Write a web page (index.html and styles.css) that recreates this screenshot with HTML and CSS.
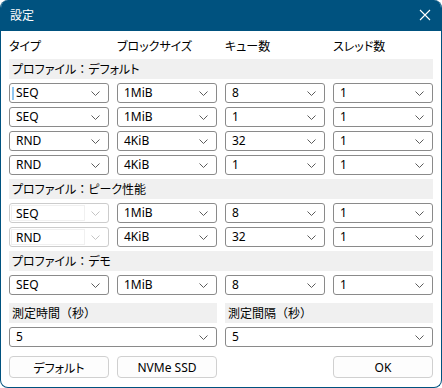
FILE: index.html
```html
<!DOCTYPE html>
<html lang="ja">
<head>
    <meta charset="UTF-8">
    <meta name="viewport" content="width=device-width, initial-scale=1.0">
    <title>設定</title>
    <link rel="stylesheet" href="styles.css">
</head>
<body>
    <div class="window">
        <div class="titlebar">
            <span class="title">設定</span>
            <svg class="close" width="12" height="12" viewBox="0 0 12 12">
                <path d="M1 1 L11 11 M11 1 L1 11" stroke="#ffffff" stroke-width="1.1" fill="none"/>
            </svg>
        </div>

        <div class="content">
            <div class="grid header">
                <span class="kana">タイプ</span>
                <span class="kana">ブロックサイズ</span>
                <span class="kana">キュー数</span>
                <span class="kana">スレッド数</span>
            </div>

            <div class="band kana">プロファイル<span class="colon">：</span>デフォルト</div>
            <div class="grid">
                <div class="select first"><span class="caret"></span><span class="value">SEQ</span><svg class="chev" width="9" height="5" viewBox="0 0 9 5"><path d="M0.5 0.5 L4.5 4.5 L8.5 0.5" stroke="#5c5c5c" fill="none"/></svg></div>
                <div class="select"><span class="value">1MiB</span><svg class="chev" width="9" height="5" viewBox="0 0 9 5"><path d="M0.5 0.5 L4.5 4.5 L8.5 0.5" stroke="#5c5c5c" fill="none"/></svg></div>
                <div class="select"><span class="value">8</span><svg class="chev" width="9" height="5" viewBox="0 0 9 5"><path d="M0.5 0.5 L4.5 4.5 L8.5 0.5" stroke="#5c5c5c" fill="none"/></svg></div>
                <div class="select"><span class="value">1</span><svg class="chev" width="9" height="5" viewBox="0 0 9 5"><path d="M0.5 0.5 L4.5 4.5 L8.5 0.5" stroke="#5c5c5c" fill="none"/></svg></div>
            </div>
            <div class="grid">
                <div class="select"><span class="value">SEQ</span><svg class="chev" width="9" height="5" viewBox="0 0 9 5"><path d="M0.5 0.5 L4.5 4.5 L8.5 0.5" stroke="#5c5c5c" fill="none"/></svg></div>
                <div class="select"><span class="value">1MiB</span><svg class="chev" width="9" height="5" viewBox="0 0 9 5"><path d="M0.5 0.5 L4.5 4.5 L8.5 0.5" stroke="#5c5c5c" fill="none"/></svg></div>
                <div class="select"><span class="value">1</span><svg class="chev" width="9" height="5" viewBox="0 0 9 5"><path d="M0.5 0.5 L4.5 4.5 L8.5 0.5" stroke="#5c5c5c" fill="none"/></svg></div>
                <div class="select"><span class="value">1</span><svg class="chev" width="9" height="5" viewBox="0 0 9 5"><path d="M0.5 0.5 L4.5 4.5 L8.5 0.5" stroke="#5c5c5c" fill="none"/></svg></div>
            </div>
            <div class="grid">
                <div class="select"><span class="value">RND</span><svg class="chev" width="9" height="5" viewBox="0 0 9 5"><path d="M0.5 0.5 L4.5 4.5 L8.5 0.5" stroke="#5c5c5c" fill="none"/></svg></div>
                <div class="select"><span class="value">4KiB</span><svg class="chev" width="9" height="5" viewBox="0 0 9 5"><path d="M0.5 0.5 L4.5 4.5 L8.5 0.5" stroke="#5c5c5c" fill="none"/></svg></div>
                <div class="select"><span class="value">32</span><svg class="chev" width="9" height="5" viewBox="0 0 9 5"><path d="M0.5 0.5 L4.5 4.5 L8.5 0.5" stroke="#5c5c5c" fill="none"/></svg></div>
                <div class="select"><span class="value">1</span><svg class="chev" width="9" height="5" viewBox="0 0 9 5"><path d="M0.5 0.5 L4.5 4.5 L8.5 0.5" stroke="#5c5c5c" fill="none"/></svg></div>
            </div>
            <div class="grid">
                <div class="select"><span class="value">RND</span><svg class="chev" width="9" height="5" viewBox="0 0 9 5"><path d="M0.5 0.5 L4.5 4.5 L8.5 0.5" stroke="#5c5c5c" fill="none"/></svg></div>
                <div class="select"><span class="value">4KiB</span><svg class="chev" width="9" height="5" viewBox="0 0 9 5"><path d="M0.5 0.5 L4.5 4.5 L8.5 0.5" stroke="#5c5c5c" fill="none"/></svg></div>
                <div class="select"><span class="value">1</span><svg class="chev" width="9" height="5" viewBox="0 0 9 5"><path d="M0.5 0.5 L4.5 4.5 L8.5 0.5" stroke="#5c5c5c" fill="none"/></svg></div>
                <div class="select"><span class="value">1</span><svg class="chev" width="9" height="5" viewBox="0 0 9 5"><path d="M0.5 0.5 L4.5 4.5 L8.5 0.5" stroke="#5c5c5c" fill="none"/></svg></div>
            </div>

            <div class="band kana">プロファイル<span class="colon">：</span>ピーク性能</div>
            <div class="grid">
                <div class="select disabled"><span class="field">SEQ</span><svg class="chev" width="9" height="5" viewBox="0 0 9 5"><path d="M0.5 0.5 L4.5 4.5 L8.5 0.5" stroke="#c4c4c4" fill="none"/></svg></div>
                <div class="select"><span class="value">1MiB</span><svg class="chev" width="9" height="5" viewBox="0 0 9 5"><path d="M0.5 0.5 L4.5 4.5 L8.5 0.5" stroke="#5c5c5c" fill="none"/></svg></div>
                <div class="select"><span class="value">8</span><svg class="chev" width="9" height="5" viewBox="0 0 9 5"><path d="M0.5 0.5 L4.5 4.5 L8.5 0.5" stroke="#5c5c5c" fill="none"/></svg></div>
                <div class="select"><span class="value">1</span><svg class="chev" width="9" height="5" viewBox="0 0 9 5"><path d="M0.5 0.5 L4.5 4.5 L8.5 0.5" stroke="#5c5c5c" fill="none"/></svg></div>
            </div>
            <div class="grid">
                <div class="select disabled"><span class="field">RND</span><svg class="chev" width="9" height="5" viewBox="0 0 9 5"><path d="M0.5 0.5 L4.5 4.5 L8.5 0.5" stroke="#c4c4c4" fill="none"/></svg></div>
                <div class="select"><span class="value">4KiB</span><svg class="chev" width="9" height="5" viewBox="0 0 9 5"><path d="M0.5 0.5 L4.5 4.5 L8.5 0.5" stroke="#5c5c5c" fill="none"/></svg></div>
                <div class="select"><span class="value">32</span><svg class="chev" width="9" height="5" viewBox="0 0 9 5"><path d="M0.5 0.5 L4.5 4.5 L8.5 0.5" stroke="#5c5c5c" fill="none"/></svg></div>
                <div class="select"><span class="value">1</span><svg class="chev" width="9" height="5" viewBox="0 0 9 5"><path d="M0.5 0.5 L4.5 4.5 L8.5 0.5" stroke="#5c5c5c" fill="none"/></svg></div>
            </div>

            <div class="band kana">プロファイル<span class="colon">：</span>デモ</div>
            <div class="grid">
                <div class="select"><span class="value">SEQ</span><svg class="chev" width="9" height="5" viewBox="0 0 9 5"><path d="M0.5 0.5 L4.5 4.5 L8.5 0.5" stroke="#5c5c5c" fill="none"/></svg></div>
                <div class="select"><span class="value">1MiB</span><svg class="chev" width="9" height="5" viewBox="0 0 9 5"><path d="M0.5 0.5 L4.5 4.5 L8.5 0.5" stroke="#5c5c5c" fill="none"/></svg></div>
                <div class="select"><span class="value">8</span><svg class="chev" width="9" height="5" viewBox="0 0 9 5"><path d="M0.5 0.5 L4.5 4.5 L8.5 0.5" stroke="#5c5c5c" fill="none"/></svg></div>
                <div class="select"><span class="value">1</span><svg class="chev" width="9" height="5" viewBox="0 0 9 5"><path d="M0.5 0.5 L4.5 4.5 L8.5 0.5" stroke="#5c5c5c" fill="none"/></svg></div>
            </div>

            <div class="measure">
                <div class="measure-col">
                    <div class="band">測定時間（秒）</div>
                    <div class="select"><span class="value">5</span><svg class="chev" width="9" height="5" viewBox="0 0 9 5"><path d="M0.5 0.5 L4.5 4.5 L8.5 0.5" stroke="#5c5c5c" fill="none"/></svg></div>
                </div>
                <div class="measure-col">
                    <div class="band">測定間隔（秒）</div>
                    <div class="select"><span class="value">5</span><svg class="chev" width="9" height="5" viewBox="0 0 9 5"><path d="M0.5 0.5 L4.5 4.5 L8.5 0.5" stroke="#5c5c5c" fill="none"/></svg></div>
                </div>
            </div>

            <div class="grid buttons">
                <button class="button kana">デフォルト</button>
                <button class="button">NVMe SSD</button>
                <span></span>
                <button class="button">OK</button>
            </div>
        </div>
    </div>
</body>
</html>
```

FILE: styles.css
```css
body {
    margin: 0;
    background: #ffffff;
    font-family: "Noto Sans", "Noto Sans CJK JP", sans-serif;
    font-size: 12px;
    color: #000000;
}

.window {
    width: 442px;
    height: 388px;
    box-sizing: border-box;
    border: 1px solid #00527f;
    border-top: none;
    border-radius: 8px;
    overflow: hidden;
    background: #ffffff;
}

.titlebar {
    height: 31px;
    background: #00527f;
    color: #ffffff;
    display: flex;
    align-items: center;
    justify-content: space-between;
    padding: 0 10px 2px 9px;
    box-sizing: border-box;
}

.title {
    font-family: "Noto Sans CJK JP", sans-serif;
    font-size: 12px;
}

.content {
    padding: 0 8px;
    display: flex;
    flex-direction: column;
    gap: 4px;
}

.kana {
    font-family: "Noto Sans CJK JP", sans-serif;
    font-feature-settings: "palt";
}

.colon {
    font-feature-settings: normal;
}

.grid {
    display: grid;
    grid-template-columns: repeat(4, 1fr);
    column-gap: 8px;
}

.header {
    height: 24px;
    align-items: end;
    line-height: 16px;
    font-size: 12px;
    padding-bottom: 1px;
    box-sizing: border-box;
}

.band {
    height: 20px;
    line-height: 20px;
    background: #f0f0f0;
    padding-left: 3px;
    font-family: "Noto Sans CJK JP", sans-serif;
    font-size: 12px;
}

.select {
    height: 20px;
    box-sizing: border-box;
    border: 1px solid #8a8a8a;
    border-radius: 3px;
    display: flex;
    align-items: center;
    padding: 0 8px 0 6px;
    background: #ffffff;
}

.select .value {
    flex: 1;
    line-height: 18px;
}

.select.first {
    padding-left: 2px;
}

.caret {
    width: 2px;
    height: 13px;
    background: #8fc6f1;
    margin-right: 2px;
}

.select.disabled {
    border-color: #cccccc;
    padding-left: 1px;
}

.select.disabled .field {
    flex: 1;
    height: 16px;
    line-height: 16px;
    border: 1px solid #f0f0f0;
    box-sizing: border-box;
    padding-left: 4px;
    margin-right: 6px;
}

.chev {
    display: block;
}

.measure {
    margin-top: 4px;
    display: grid;
    grid-template-columns: 1fr 1fr;
    column-gap: 8px;
}

.measure-col {
    display: flex;
    flex-direction: column;
    gap: 4px;
}

.buttons {
    margin-top: 5px;
}

.button {
    height: 22px;
    border: 1px solid #d0d0d0;
    border-radius: 4px;
    background: #fdfdfd;
    font-family: "Noto Sans", "Noto Sans CJK JP", sans-serif;
    font-size: 12px;
    color: #000000;
    padding: 0;
}

.button.kana {
    font-family: "Noto Sans CJK JP", sans-serif;
}
```
